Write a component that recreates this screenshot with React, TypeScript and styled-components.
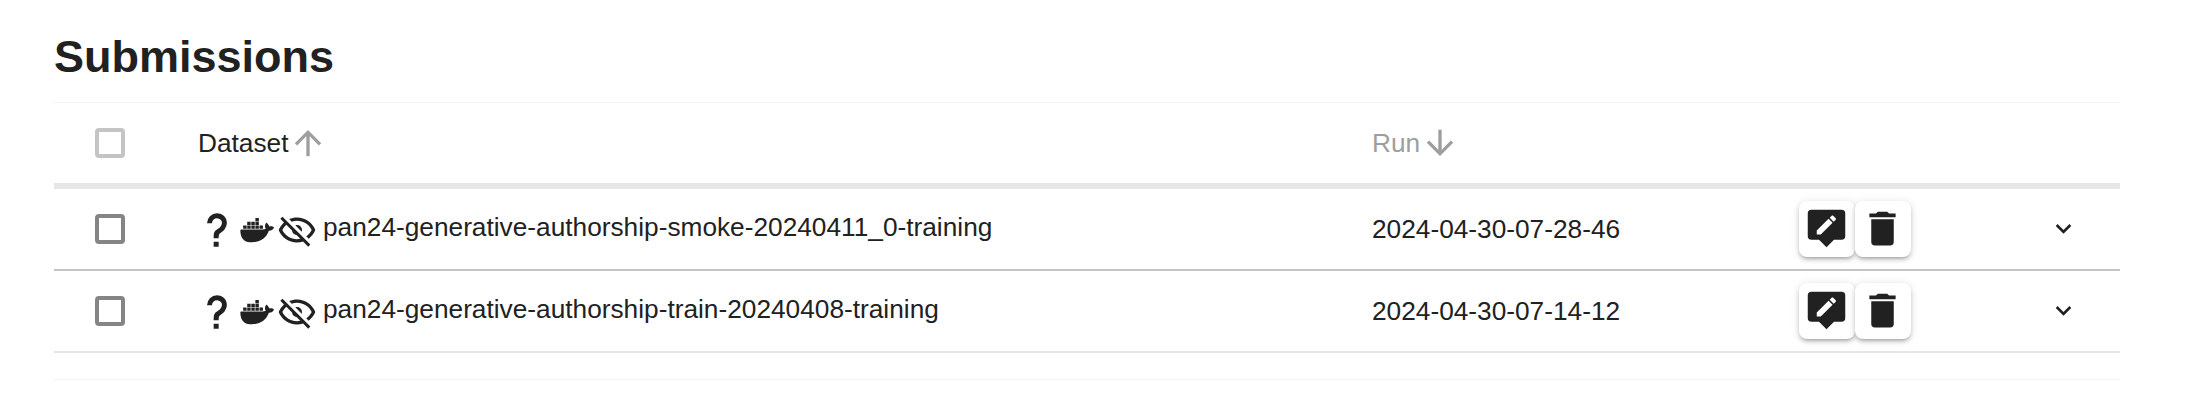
import * as React from 'react';
import styled, { createGlobalStyle } from 'styled-components';

const GlobalStyle = createGlobalStyle`
  html, body {
    margin: 0;
    background: #fff;
    color: #212121;
    font-family: "Liberation Sans", Arial, sans-serif;
  }
`;

const ICONS: Record<string, string> = {
  arrowUp: 'M13,20H11V8L5.5,13.5L4.08,12.08L12,4.16L19.92,12.08L18.5,13.5L13,8V20Z',
  arrowDown: 'M11,4H13V16L18.5,10.5L19.92,11.92L12,19.84L4.08,11.92L5.5,10.5L11,16V4Z',
  chevron: 'M7.41,8.58L12,13.17L16.59,8.58L18,10L12,16L6,10L7.41,8.58Z',
  trash: 'M19,4H15.5L14.5,3H9.5L8.5,4H5V6H19M6,19A2,2 0 0,0 8,21H16A2,2 0 0,0 18,19V7H6V19Z',
  tooltipEdit:
    'M4,2H20A2,2 0 0,1 22,4V16A2,2 0 0,1 20,18H16L12,22L8,18H4A2,2 0 0,1 2,16V4A2,2 0 0,1 4,2Z M6.8,13.13V15.26H8.94L15.24,8.95L13.1,6.81Z M13.71,6.21L15.85,8.35L16.9,7.3C17.12,7.08 17.12,6.7 16.9,6.49L15.57,5.17C15.35,4.95 14.98,4.95 14.76,5.17Z',
  help:
    'M10,19H13V22H10V19M12,2C17.35,2.22 19.68,7.62 16.5,11.67C15.67,12.67 14.33,13.33 13.67,14.17C13,15 13,16 13,17H10C10,15.33 10,13.92 10.67,12.92C11.33,11.92 12.67,11.33 13.5,10.67C15.92,8.43 15.32,5.26 12,5A3,3 0 0,0 9,8H6A6,6 0 0,1 12,2Z',
  docker:
    'M21.81,10.25C21.75,10.21 21.25,9.82 20.17,9.82C19.89,9.82 19.61,9.85 19.33,9.9C19.12,8.46 17.93,7.76 17.88,7.73L17.59,7.56L17.4,7.83C17.16,8.2 17,8.61 16.89,9.04C16.7,9.86 16.82,10.63 17.24,11.29C16.73,11.58 15.91,11.65 15.74,11.65H2.62C2.28,11.65 2,11.93 2,12.27C2,13.45 2.18,14.62 2.58,15.73C3.04,16.94 3.72,17.83 4.61,18.38C5.61,19 7.23,19.32 9.06,19.32C9.89,19.32 10.72,19.25 11.54,19.1C12.68,18.89 13.77,18.5 14.78,17.92C15.61,17.44 16.35,16.83 16.98,16.12C18.03,14.93 18.65,13.6 19.11,12.42H19.3C20.44,12.42 21.15,11.96 21.54,11.57C21.8,11.33 22,11.04 22.14,10.7L22.22,10.46L21.81,10.25Z M3.7,9.34H5.77V11.24H3.7Z M6.13,9.34H8.2V11.24H6.13Z M8.6,9.34H10.67V11.24H8.6Z M11.04,9.34H13.11V11.24H11.04Z M13.5,9.34H15.57V11.24H13.5Z M6.13,7.1H8.2V9H6.13Z M8.6,7.1H10.67V9H8.6Z M11.04,7.1H13.11V9H11.04Z M11.04,4.85H13.11V6.75H11.04Z',
  eyeOff:
    'M2,5.27L3.28,4L20,20.72L18.73,22L15.65,18.92C14.5,19.3 13.28,19.5 12,19.5C7,19.5 2.73,16.39 1,12C1.69,10.24 2.79,8.69 4.19,7.46L2,5.27M12,9A3,3 0 0,1 15,12C15,12.35 14.94,12.69 14.83,13L11,9.17C11.31,9.06 11.65,9 12,9M12,4.5C17,4.5 21.27,7.61 23,12C22.18,14.08 20.79,15.88 19,17.19L17.58,15.76C18.94,14.82 20.06,13.54 20.82,12C19.17,8.64 15.76,6.5 12,6.5C10.91,6.5 9.84,6.68 8.84,7L7.3,5.47C8.74,4.85 10.33,4.5 12,4.5M3.18,12C4.83,15.36 8.24,17.5 12,17.5C12.69,17.5 13.37,17.43 14,17.29L11.72,15C10.29,14.85 9.15,13.71 9,12.28L5.6,8.87C4.61,9.72 3.78,10.78 3.18,12Z',
};

const Page = styled.div`
  padding: 0 76px 0 54px;
`;

const Title = styled.h1`
  margin: 0;
  height: 102px;
  padding-top: 32px;
  box-sizing: border-box;
  font-size: 45px;
  line-height: 50px;
  font-weight: 700;
  color: #212121;
`;

const Table = styled.div`
  border-top: 1px solid #f3f3f3;
  border-bottom: 1px solid #f3f3f3;
  padding-bottom: 26px;
`;

const Row = styled.div<{ $header?: boolean; $divider?: string }>`
  display: grid;
  grid-template-columns: 144px 1174px 427px 112px 1fr;
  align-items: center;
  box-sizing: border-box;
  height: ${(p) => (p.$header ? '86px' : '82px')};
  border-bottom: ${(p) => (p.$header ? '6px' : '2px')} solid ${(p) => p.$divider};
`;

const CheckCell = styled.div`
  display: flex;
  padding-left: 41px;
`;

const Checkbox = styled.span<{ $muted?: boolean }>`
  display: block;
  box-sizing: border-box;
  width: 30px;
  height: 30px;
  border: 4px solid ${(p) => (p.$muted ? '#c4c4c4' : '#858585')};
  border-radius: 4px;
`;

const HeadCell = styled.div<{ $muted?: boolean }>`
  display: flex;
  align-items: center;
  font-size: 26.25px;
  color: ${(p) => (p.$muted ? '#9e9e9e' : '#212121')};
`;

const DatasetCell = styled.div`
  display: flex;
  align-items: center;
  font-size: 26.25px;
`;

const DatasetName = styled.span`
  margin-top: -3px;
`;

const TagIcons = styled.div`
  display: flex;
  align-items: center;
  margin-left: -1px;
  margin-right: 6px;
  padding-top: 2px;
`;

const RunCell = styled.div`
  font-size: 26.25px;
`;

const Actions = styled.div`
  display: flex;
`;

const ActionButton = styled.button`
  display: flex;
  align-items: center;
  justify-content: center;
  width: 56px;
  height: 56px;
  padding: 0 1px 2px 0;
  border: none;
  border-radius: 8px;
  background: #fff;
  color: #212121;
  box-shadow: 0 3px 3px -2px rgba(0, 0, 0, 0.2), 0 3px 4px 0 rgba(0, 0, 0, 0.14),
    0 1px 8px 0 rgba(0, 0, 0, 0.12);
`;

const ExpandCell = styled.div`
  display: flex;
  justify-content: flex-end;
  padding: 0 41px 2px 0;
  color: #212121;
`;

const Svg = styled.svg<{ $muted?: boolean }>`
  display: block;
  fill: ${(p) => (p.$muted ? '#9e9e9e' : 'currentColor')};
  fill-rule: evenodd;
`;

const Icon = ({ name, size, muted }: { name: string; size: number; muted?: boolean }) => (
  <Svg $muted={muted} viewBox="0 0 24 24" width={size} height={size}>
    <path d={ICONS[name]} />
  </Svg>
);

const rows = [
  {
    dataset: 'pan24-generative-authorship-smoke-20240411_0-training',
    run: '2024-04-30-07-28-46',
    divider: '#c4c4c4',
  },
  {
    dataset: 'pan24-generative-authorship-train-20240408-training',
    run: '2024-04-30-07-14-12',
    divider: '#e6e6e6',
  },
];

export default function App() {
  return (
    <Page>
      <GlobalStyle />
      <Title>Submissions</Title>
      <Table>
        <Row $header $divider="#e6e6e6">
          <CheckCell>
            <Checkbox $muted />
          </CheckCell>
          <HeadCell>
            Dataset
            <Icon name="arrowUp" size={40} muted />
          </HeadCell>
          <HeadCell $muted>
            Run
            <Icon name="arrowDown" size={40} muted />
          </HeadCell>
          <div />
          <div />
        </Row>
        {rows.map((r) => (
          <Row key={r.run} $divider={r.divider}>
            <CheckCell>
              <Checkbox />
            </CheckCell>
            <DatasetCell>
              <TagIcons>
                <Icon name="help" size={40} />
                <Icon name="docker" size={40} />
                <Icon name="eyeOff" size={40} />
              </TagIcons>
              <DatasetName>{r.dataset}</DatasetName>
            </DatasetCell>
            <RunCell>{r.run}</RunCell>
            <Actions>
              <ActionButton>
                <Icon name="tooltipEdit" size={45} />
              </ActionButton>
              <ActionButton>
                <Icon name="trash" size={45} />
              </ActionButton>
            </Actions>
            <ExpandCell>
              <Icon name="chevron" size={31} />
            </ExpandCell>
          </Row>
        ))}
      </Table>
    </Page>
  );
}
